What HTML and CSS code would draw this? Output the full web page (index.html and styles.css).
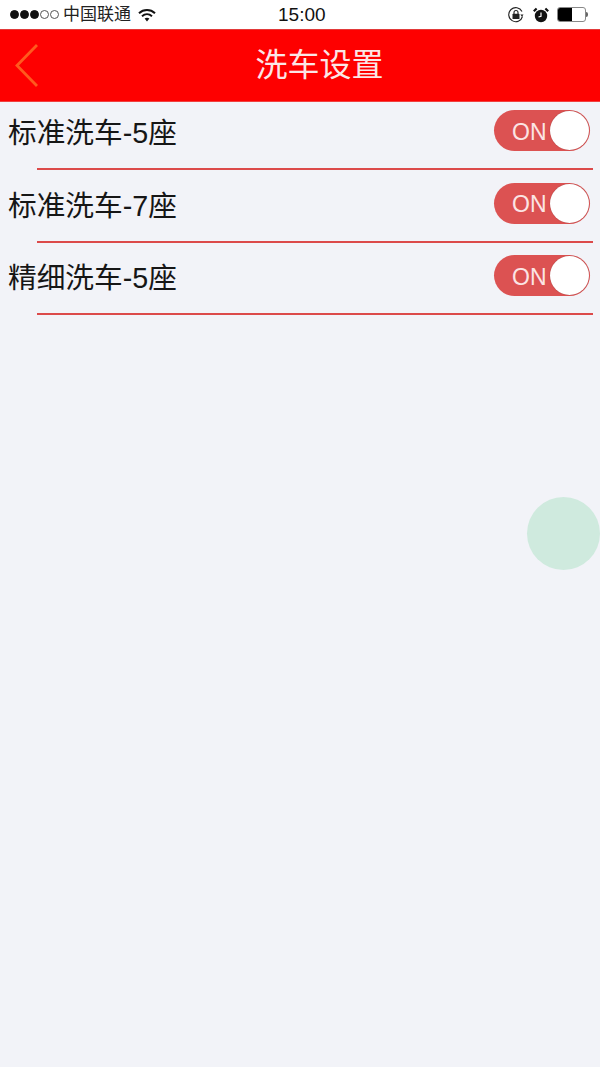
FILE: index.html
```html
<!DOCTYPE html>
<html lang="zh">
<head>
<meta charset="utf-8">
<title>洗车设置</title>
<link rel="stylesheet" href="styles.css">
</head>
<body>
<div class="page">
  <div class="status">
    <div class="status-left">
      <span class="signal"><i class="on"></i><i class="on"></i><i class="on"></i><i></i><i></i></span>
      <span class="carrier">中国联通</span>
      <svg class="wifi" width="18" height="14" viewBox="0 0 18 14"><path d="M1 5.200C5.600 1 12.400 1 17 5.200" fill="none" stroke="#111" stroke-width="2"/><path d="M4 8.200c3-2.700 7-2.700 10 0" fill="none" stroke="#111" stroke-width="2"/><path d="M6.600 10.600c1.500-1.200 3.300-1.200 4.800 0L9 13.400z" fill="#111"/></svg>
    </div>
    <span class="time">15:00</span>
    <div class="status-right">
      <svg class="lock" width="18" height="18" viewBox="0 0 18 18"><path d="M15.500 10.500A7 7 0 1 1 15 5.500" fill="none" stroke="#222" stroke-width="1.100"/><path d="M16.500 8.500l-1.500 2.300-1.700-2.200z" fill="#222"/><rect x="5.500" y="7.800" width="7" height="5.200" rx=".6" fill="#222"/><path d="M7 8V6.500a2 2 0 0 1 4 0V8" fill="none" stroke="#222" stroke-width="1.100"/></svg>
      <svg class="alarm" width="16" height="16" viewBox="0 0 16 16"><circle cx="8" cy="9" r="6.200" fill="#111"/><path d="M8 5.500V9.300L5.500 10" fill="none" stroke="#fff" stroke-width="1.200"/><path d="M.8 4.200 3.600 1.500M15.200 4.200 12.400 1.500" stroke="#111" stroke-width="2.200"/></svg>
      <div class="battery"><div class="battery-body"><div class="battery-fill"></div></div><div class="battery-tip"></div></div>
    </div>
  </div>
  <header class="nav">
    <svg class="back" width="26" height="46" viewBox="0 0 26 46"><path d="M23 2 3 22.500 23 43" fill="none" stroke="#ff5a1e" stroke-width="2.800"/></svg>
    <h1 class="title">洗车设置</h1>
  </header>
  <ul class="list">
    <li class="row"><span class="label">标准洗车-5座</span><span class="toggle"><span class="on-text">ON</span><span class="knob"></span></span></li>
    <li class="row"><span class="label">标准洗车-7座</span><span class="toggle"><span class="on-text">ON</span><span class="knob"></span></span></li>
    <li class="row"><span class="label">精细洗车-5座</span><span class="toggle"><span class="on-text">ON</span><span class="knob"></span></span></li>
  </ul>
  <div class="float-ball"></div>
</div>
</body>
</html>
```
FILE: styles.css
```css
* { box-sizing: border-box; }
html, body { margin: 0; padding: 0; }
body {
  width: 600px;
  height: 1067px;
  overflow: hidden;
  background: #f2f3f8;
  font-family: "Liberation Sans", "Noto Sans CJK SC", sans-serif;
}
.page { position: relative; width: 600px; height: 1067px; }
.status {
  height: 29px;
  background: #fff;
  display: flex;
  align-items: center;
  justify-content: space-between;
  position: relative;
  padding: 0 12px 0 10px;
  color: #222;
}
.status-left { display: flex; align-items: center; }
.signal { display: flex; gap: 1px; }
.signal i {
  width: 9px;
  height: 9px;
  border-radius: 50%;
  border: 1px solid #555;
}
.signal i.on { background: #111; border-color: #111; }
.carrier { font-size: 17px; margin-left: 4px; line-height: 20px; }
.wifi { margin-left: 7px; }
.time {
  position: absolute;
  left: 278px;
  top: 4px;
  font-size: 19px;
  line-height: 22px;
  color: #111;
}
.status-right { display: flex; align-items: center; gap: 8px; }
.battery { display: flex; align-items: center; }
.battery-body {
  width: 29px;
  height: 15px;
  border: 1px solid #888;
  border-radius: 3px;
  background: #fff;
}
.battery-fill { width: 14px; height: 100%; background: #000; border-radius: 2px 0 0 2px; }
.battery-tip { width: 2px; height: 5px; background: #666; border-radius: 0 2px 2px 0; }
.nav {
  height: 73px;
  background: #fe0000;
  display: flex;
  align-items: center;
  justify-content: center;
  position: relative;
  border-top: 1px solid #e23a3a;
  border-bottom: 1px solid #f04040;
}
.back { position: absolute; left: 14px; top: 13px; }
.title {
  margin: -1px 0 0 39px;
  font-size: 32px;
  line-height: 40px;
  font-weight: 400;
  color: #fbe6e6;
}
.list { list-style: none; margin: 0; padding: 0; }
.row {
  height: 72.500px;
  display: flex;
  align-items: flex-start;
  justify-content: space-between;
  padding: 8px 10px 0 8px;
  position: relative;
}
.row::after {
  content: "";
  position: absolute;
  left: 37px;
  right: 7px;
  bottom: 4.500px;
  height: 2px;
  background: #dc4a4a;
}
.label { font-size: 28.700px; line-height: 46px; color: #161616; }
.toggle {
  width: 96px;
  height: 41px;
  border-radius: 21px;
  background: #dc5252;
  display: flex;
  align-items: center;
  position: relative;
  padding: 3px 0 0 18px;
}
.on-text { color: #fbe4e4; font-size: 23px; line-height: 1; }
.knob {
  position: absolute;
  right: 1px;
  top: 1px;
  width: 39px;
  height: 39px;
  border-radius: 50%;
  background: #fff;
  box-shadow: 0 0 1px #8c3030;
}
.float-ball {
  position: absolute;
  left: 527px;
  top: 497px;
  width: 73px;
  height: 73px;
  border-radius: 50%;
  background: #cfeade;
}
```
